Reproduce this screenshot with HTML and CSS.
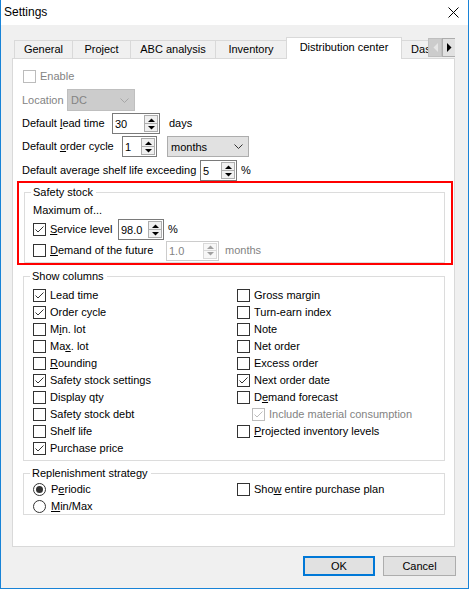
FILE: index.html
```html
<!DOCTYPE html>
<html lang="en">
<head>
<meta charset="utf-8">
<title>Settings</title>
<link rel="stylesheet" href="styles.css">
</head>
<body>
<div class="window">
  <div class="titlebar">
    <span class="title">Settings</span>
    <svg class="close" width="11" height="11" viewBox="0 0 11 11"><path d="M0.5 0.5L10.5 10.5M10.5 0.5L0.5 10.5" stroke="#000" stroke-width="1" fill="none"/></svg>
  </div>
  <div class="client">
    <div class="tabstrip">
      <div class="tab t-general">General</div>
      <div class="tab t-project">Project</div>
      <div class="tab t-abc">ABC analysis</div>
      <div class="tab t-inv">Inventory</div>
      <div class="tab sel t-dc">Distribution center</div>
      <div class="tab t-dash">Dashboard</div>
      <div class="tabscroll">
        <span class="sbtn dis"><svg width="5" height="9" viewBox="0 0 5 9"><path d="M5 0L0.5 4.5L5 9Z" fill="#e6e6e6"/></svg></span>
        <span class="sbtn"><svg width="5" height="9" viewBox="0 0 5 9"><path d="M0 0L4.5 4.5L0 9Z" fill="#000"/></svg></span>
      </div>
    </div>
    <div class="panel">
      <div class="row r-enable">
        <span class="cb dis"></span><span class="lbl dis gap4">Enable</span>
      </div>
      <div class="row r-loc">
        <span class="lbl dis w-loc">Location</span>
        <span class="combo dis w-dc"><span class="ctext">DC</span><svg class="chev" width="9" height="5" viewBox="0 0 9 5"><path d="M0.5 0.5L4.5 4.5L8.5 0.5" fill="none" stroke="#a6a6a6"/></svg></span>
      </div>
      <div class="row r-lead">
        <span class="lbl w-lead">Default <u>l</u>ead time</span>
        <span class="spin w-s30"><span class="sval">30</span><span class="sbtns"><span class="sb"><svg width="7" height="4" viewBox="0 0 7 4"><path d="M0 4L3.5 0.5L7 4Z" fill="#000"/></svg></span><span class="sb"><svg width="7" height="4" viewBox="0 0 7 4"><path d="M0 0L3.5 3.5L7 0Z" fill="#000"/></svg></span></span></span>
        <span class="unit u-days">days</span>
      </div>
      <div class="row r-cycle">
        <span class="lbl w-cycle">Default <u>o</u>rder cycle</span>
        <span class="spin w-s1"><span class="sval">1</span><span class="sbtns"><span class="sb"><svg width="7" height="4" viewBox="0 0 7 4"><path d="M0 4L3.5 0.5L7 4Z" fill="#000"/></svg></span><span class="sb"><svg width="7" height="4" viewBox="0 0 7 4"><path d="M0 0L3.5 3.5L7 0Z" fill="#000"/></svg></span></span></span>
        <span class="combo w-months"><span class="ctext">months</span><svg class="chev" width="9" height="5" viewBox="0 0 9 5"><path d="M0.5 0.5L4.5 4.5L8.5 0.5" fill="none" stroke="#333"/></svg></span>
      </div>
      <div class="row r-shelf">
        <span class="lbl w-shelf">Default average shelf life exceeding</span>
        <span class="spin w-s5"><span class="sval">5</span><span class="sbtns"><span class="sb"><svg width="7" height="4" viewBox="0 0 7 4"><path d="M0 4L3.5 0.5L7 4Z" fill="#000"/></svg></span><span class="sb"><svg width="7" height="4" viewBox="0 0 7 4"><path d="M0 0L3.5 3.5L7 0Z" fill="#000"/></svg></span></span></span>
        <span class="unit u-pct">%</span>
      </div>

      <div class="highlight">
        <fieldset class="group g-safety">
          <legend>Safety stock</legend>
          <div class="row h17"><span class="lbl">Maximum of...</span></div>
          <div class="row h21">
            <span class="cb"><svg width="11" height="11" viewBox="0 0 11 11"><path d="M1.5 5.5L4 8L9.5 2.5" fill="none" stroke="#333" stroke-width="1"/></svg></span>
            <span class="lbl gap4 w-service"><u>S</u>ervice level</span>
            <span class="spin w-s98"><span class="sval">98.0</span><span class="sbtns"><span class="sb"><svg width="7" height="4" viewBox="0 0 7 4"><path d="M0 4L3.5 0.5L7 4Z" fill="#000"/></svg></span><span class="sb"><svg width="7" height="4" viewBox="0 0 7 4"><path d="M0 0L3.5 3.5L7 0Z" fill="#000"/></svg></span></span></span>
            <span class="unit u-pct2">%</span>
          </div>
          <div class="row h21">
            <span class="cb"></span>
            <span class="lbl gap4 w-demand"><u>D</u>emand of the future</span>
            <span class="spin dis w-s10"><span class="sval">1.0</span><span class="sbtns"><span class="sb"><svg width="7" height="4" viewBox="0 0 7 4"><path d="M0 4L3.5 0.5L7 4Z" fill="#a0a0a0"/></svg></span><span class="sb"><svg width="7" height="4" viewBox="0 0 7 4"><path d="M0 0L3.5 3.5L7 0Z" fill="#a0a0a0"/></svg></span></span></span>
            <span class="unit dis u-months">months</span>
          </div>
        </fieldset>
      </div>

      <fieldset class="group g-columns">
        <legend>Show columns</legend>
        <div class="colgrid">
          <div class="row h17"><span class="cb"><svg width="11" height="11" viewBox="0 0 11 11"><path d="M1.5 5.5L4 8L9.5 2.5" fill="none" stroke="#333" stroke-width="1"/></svg></span><span class="lbl gap4">Lead time</span></div>
          <div class="row h17"><span class="cb"><svg width="11" height="11" viewBox="0 0 11 11"><path d="M1.5 5.5L4 8L9.5 2.5" fill="none" stroke="#333" stroke-width="1"/></svg></span><span class="lbl gap4">Order cycle</span></div>
          <div class="row h17"><span class="cb"></span><span class="lbl gap4">M<u>i</u>n. lot</span></div>
          <div class="row h17"><span class="cb"></span><span class="lbl gap4">Ma<u>x</u>. lot</span></div>
          <div class="row h17"><span class="cb"></span><span class="lbl gap4"><u>R</u>ounding</span></div>
          <div class="row h17"><span class="cb"><svg width="11" height="11" viewBox="0 0 11 11"><path d="M1.5 5.5L4 8L9.5 2.5" fill="none" stroke="#333" stroke-width="1"/></svg></span><span class="lbl gap4">Safety stock settings</span></div>
          <div class="row h17"><span class="cb"></span><span class="lbl gap4">Display qty</span></div>
          <div class="row h17"><span class="cb"></span><span class="lbl gap4">Safety stock debt</span></div>
          <div class="row h17"><span class="cb"></span><span class="lbl gap4">Shelf life</span></div>
          <div class="row h17"><span class="cb"><svg width="11" height="11" viewBox="0 0 11 11"><path d="M1.5 5.5L4 8L9.5 2.5" fill="none" stroke="#333" stroke-width="1"/></svg></span><span class="lbl gap4">Purchase price</span></div>

          <div class="row h17"><span class="cb"></span><span class="lbl gap4">Gross margin</span></div>
          <div class="row h17"><span class="cb"></span><span class="lbl gap4">Turn-earn index</span></div>
          <div class="row h17"><span class="cb"></span><span class="lbl gap4">Note</span></div>
          <div class="row h17"><span class="cb"></span><span class="lbl gap4">Net order</span></div>
          <div class="row h17"><span class="cb"></span><span class="lbl gap4">Excess order</span></div>
          <div class="row h17"><span class="cb"><svg width="11" height="11" viewBox="0 0 11 11"><path d="M1.5 5.5L4 8L9.5 2.5" fill="none" stroke="#333" stroke-width="1"/></svg></span><span class="lbl gap4">Next order date</span></div>
          <div class="row h17"><span class="cb"></span><span class="lbl gap4">D<u>e</u>mand forecast</span></div>
          <div class="row h17 indent"><span class="cb dis"><svg width="11" height="11" viewBox="0 0 11 11"><path d="M1.5 5.5L4 8L9.5 2.5" fill="none" stroke="#bcbcbc" stroke-width="1"/></svg></span><span class="lbl dis gap4">Include material consumption</span></div>
          <div class="row h17"><span class="cb"></span><span class="lbl gap4"><u>P</u>rojected inventory levels</span></div>
        </div>
      </fieldset>

      <fieldset class="group g-repl">
        <legend>Replenishment strategy</legend>
        <div class="replgrid">
          <div class="row h17"><span class="rb on"></span><span class="lbl gap5">P<u>e</u>riodic</span></div>
          <div class="row h17"><span class="cb"></span><span class="lbl gap4">Sho<u>w</u> entire purchase plan</span></div>
          <div class="row h16"><span class="rb"></span><span class="lbl gap5"><u>M</u>in/Max</span></div>
        </div>
      </fieldset>
    </div>
    <div class="buttons">
      <button class="btn default" type="button">OK</button>
      <button class="btn" type="button">Cancel</button>
    </div>
  </div>
</div>
</body>
</html>
```

FILE: styles.css
```css
* { box-sizing: border-box; }
html, body { margin: 0; padding: 0; }
body {
  font-family: "Liberation Sans", Arial, sans-serif;
  font-size: 11px;
  color: #000;
  background: #fff;
}
u { text-decoration: underline; text-underline-offset: 1px; }

.window {
  width: 469px;
  height: 589px;
  border: 1px solid #1883d7;
  border-top: none;
  display: flex;
  flex-direction: column;
  background: #f0f0f0;
}
.titlebar {
  height: 25px;
  flex: none;
  background: #fff;
  display: flex;
  align-items: center;
  justify-content: space-between;
  padding: 0 9px 0 3px;
}
.title { font-size: 12px; line-height: 15px; }
.close { display: block; }

.client {
  flex: 1;
  display: flex;
  flex-direction: column;
  padding: 12px 13px 0 11px;
}

/* tabs */
.tabstrip {
  height: 22px;
  flex: none;
  margin-left: 2px;
  display: flex;
  align-items: flex-start;
  overflow: hidden;
  position: relative;
  z-index: 1;
}
.tab {
  flex: none;
  height: 18px;
  margin-top: 3px;
  margin-right: -1px;
  border: 1px solid #d9d9d9;
  border-bottom: none;
  background: #f0f0f0;
  text-align: center;
  line-height: 16px;
  white-space: nowrap;
}
.tab.sel {
  height: 22px;
  margin-top: 0;
  background: #fff;
  line-height: 19px;
}
.t-general { width: 59px; }
.t-project { width: 59px; }
.t-abc { width: 86px; }
.t-inv { width: 72px; }
.t-dc { width: 116px; }
.t-dash { width: 74px; }
.tabscroll {
  position: absolute;
  left: 414px;
  top: 1px;
  width: 28px;
  height: 19px;
  display: flex;
}
.sbtn {
  width: 14px;
  height: 19px;
  display: flex;
  align-items: center;
  justify-content: center;
  background: #e1e1e1;
  border: 1px solid #adadad;
}
.sbtn.dis { background: #cccccc; border-color: #bfbfbf; }

/* panel */
.panel {
  flex: none;
  height: 489px;
  margin-top: -1px;
  background: #fff;
  border: 1px solid #d9d9d9;
  padding: 9px 9px 0 10px;
  display: flex;
  flex-direction: column;
}
.row {
  display: flex;
  align-items: center;
  white-space: nowrap;
}
.h16 { height: 16px; }
.h17 { height: 17px; }
.h21 { height: 21px; }
.lbl { line-height: 15px; }
.dis { color: #838383; }
.gap4 { margin-left: 4px; }
.gap5 { margin-left: 5px; }

.r-enable { height: 17px; }
.r-loc { height: 22px; margin-top: 4px; margin-left: -1px; }
.r-lead { height: 21px; margin-top: 2px; margin-left: -1px; }
.r-cycle { height: 21px; margin-top: 2px; margin-left: -1px; }
.r-shelf { height: 21px; margin-top: 3px; margin-left: -1px; }

.w-loc { width: 45px; }
.w-lead { width: 90px; }
.w-cycle { width: 100px; }
.w-shelf { width: 178px; }
.w-service { width: 68px; }
.w-demand { width: 116px; }

/* checkbox / radio */
.cb {
  flex: none;
  width: 13px;
  height: 13px;
  border: 1px solid #333;
  background: #fff;
  display: flex;
}
.cb svg { display: block; }
.cb.dis { border-color: #bcbcbc; }
.rb {
  flex: none;
  width: 13px;
  height: 13px;
  border: 1px solid #333;
  border-radius: 50%;
  background: #fff;
  display: flex;
  align-items: center;
  justify-content: center;
}
.rb.on::after {
  content: "";
  width: 7px;
  height: 7px;
  border-radius: 50%;
  background: #333;
}

/* combobox */
.combo {
  flex: none;
  height: 21px;
  display: flex;
  align-items: center;
  justify-content: space-between;
  padding: 0 5px 0 3px;
  background: #e1e1e1;
  border: 1px solid #adadad;
}
.combo.dis { background: #cccccc; border-color: #bfbfbf; height: 22px; }
.chev { display: block; }
.w-dc { width: 68px; }
.w-months { width: 82px; margin-left: 10px; }

/* spin */
.spin {
  flex: none;
  height: 21px;
  display: flex;
  align-items: stretch;
  background: #fff;
  border: 1px solid #7a7a7a;
  padding: 1px;
}
.spin.dis { border-color: #cccccc; color: #838383; }
.sval { flex: 1; display: flex; align-items: center; padding-left: 1px; }
.sbtns {
  flex: none;
  width: 14px;
  display: flex;
  flex-direction: column;
}
.sb {
  flex: 1;
  display: flex;
  align-items: center;
  justify-content: center;
  background: #f0f0f0;
  border: 1px solid #adadad;
}
.sb + .sb { border-top: none; }
.spin.dis .sb { border-color: #d9d9d9; background: #f7f7f7; }
.sb svg { display: block; }
.w-s30 { width: 48px; }
.w-s1 { width: 35px; }
.w-s5 { width: 37px; }
.w-s98 { width: 46px; }
.w-s10 { width: 53px; height: 20px; }

.unit { line-height: 15px; }
.u-days { margin-left: 9px; }
.u-pct { margin-left: 4px; }
.u-pct2 { margin-left: 4px; }
.u-months { margin-left: 6px; }

/* highlight box */
.highlight {
  flex: none;
  height: 84px;
  margin: 0 -8px 0 -6px;
  border: 2px solid #ff0000;
  padding: 0 6px 0 5px;
}

/* group boxes */
.group {
  margin: 0;
  min-width: 0;
  border: 1px solid #dcdcdc;
}
.group legend {
  padding: 0 3px 0 2px;
  line-height: 15px;
  margin-left: -3px;
}
.g-safety { margin-top: 2px; padding: 2px 8px 1px 8px; }
.g-safety legend { margin-left: -2px; }
.g-columns { margin-top: 4px; padding: 3px 9px 3px 9px; }
.g-repl { margin-top: 5px; padding: 0 9px 0 9px; }

.colgrid {
  display: grid;
  grid-template-columns: 204px 1fr;
  grid-template-rows: repeat(10, 17px);
  grid-auto-flow: column;
}
.indent { padding-left: 15px; }
.replgrid {
  display: grid;
  grid-template-columns: 204px 1fr;
}

/* buttons */
.buttons {
  flex: none;
  display: flex;
  justify-content: flex-end;
  gap: 8px;
  margin-top: 9px;
  margin-right: -1px;
}
.btn {
  width: 73px;
  height: 20px;
  padding: 0;
  font: inherit;
  color: #000;
  background: #e1e1e1;
  border: 1px solid #adadad;
  border-radius: 0;
}
.btn.default { border: 2px solid #0078d7; width: 72px; }
```
